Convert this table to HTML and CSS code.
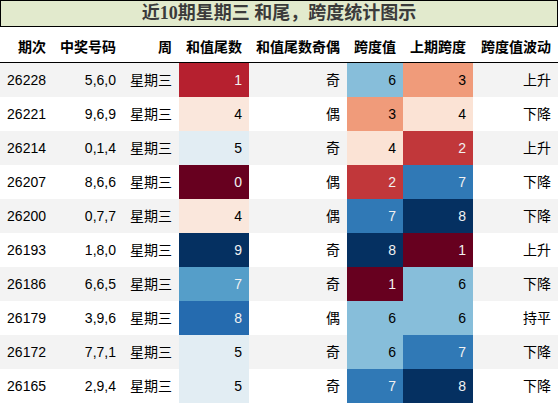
FILE: index.html
```html
<!DOCTYPE html>
<html lang="zh">
<head>
    <meta charset="UTF-8">
    <meta name="viewport" content="width=device-width, initial-scale=1.0">
    <title>近10期星期三 和尾，跨度统计图示</title>
    <link rel="stylesheet" href="styles.css">
</head>
<body>
    <table class="stats">
      <caption>近10期星期三 和尾，跨度统计图示</caption>
      <colgroup>
        <col class="c-issue">
        <col class="c-nums">
        <col class="c-week">
        <col class="c-tail">
        <col class="c-parity">
        <col class="c-span">
        <col class="c-prev">
        <col class="c-trend">
      </colgroup>
      <thead>
        <tr>
          <th>期次</th>
          <th>中奖号码</th>
          <th>周</th>
          <th>和值尾数</th>
          <th>和值尾数奇偶</th>
          <th>跨度值</th>
          <th>上期跨度</th>
          <th>跨度值波动</th>
        </tr>
      </thead>
      <tbody>
        <tr>
          <td>26228</td><td>5,6,0</td><td>星期三</td>
          <td class="g-b1 light">1</td><td>奇</td>
          <td class="g-k6">6</td><td class="g-k3">3</td><td>上升</td>
        </tr>
        <tr>
          <td>26221</td><td>9,6,9</td><td>星期三</td>
          <td class="g-b4">4</td><td>偶</td>
          <td class="g-k3">3</td><td class="g-k4">4</td><td>下降</td>
        </tr>
        <tr>
          <td>26214</td><td>0,1,4</td><td>星期三</td>
          <td class="g-b5">5</td><td>奇</td>
          <td class="g-k4">4</td><td class="g-k2 light">2</td><td>上升</td>
        </tr>
        <tr>
          <td>26207</td><td>8,6,6</td><td>星期三</td>
          <td class="g-b0 light">0</td><td>偶</td>
          <td class="g-k2 light">2</td><td class="g-k7 light">7</td><td>下降</td>
        </tr>
        <tr>
          <td>26200</td><td>0,7,7</td><td>星期三</td>
          <td class="g-b4">4</td><td>偶</td>
          <td class="g-k7 light">7</td><td class="g-k8 light">8</td><td>下降</td>
        </tr>
        <tr>
          <td>26193</td><td>1,8,0</td><td>星期三</td>
          <td class="g-b9 light">9</td><td>奇</td>
          <td class="g-k8 light">8</td><td class="g-k1 light">1</td><td>上升</td>
        </tr>
        <tr>
          <td>26186</td><td>6,6,5</td><td>星期三</td>
          <td class="g-b7 light">7</td><td>奇</td>
          <td class="g-k1 light">1</td><td class="g-k6">6</td><td>下降</td>
        </tr>
        <tr>
          <td>26179</td><td>3,9,6</td><td>星期三</td>
          <td class="g-b8 light">8</td><td>偶</td>
          <td class="g-k6">6</td><td class="g-k6">6</td><td>持平</td>
        </tr>
        <tr>
          <td>26172</td><td>7,7,1</td><td>星期三</td>
          <td class="g-b5">5</td><td>奇</td>
          <td class="g-k6">6</td><td class="g-k7 light">7</td><td>下降</td>
        </tr>
        <tr>
          <td>26165</td><td>2,9,4</td><td>星期三</td>
          <td class="g-b5">5</td><td>奇</td>
          <td class="g-k7 light">7</td><td class="g-k8 light">8</td><td>下降</td>
        </tr>
      </tbody>
    </table>
</body>
</html>
```

FILE: styles.css
```css
body {
  margin: 0;
  font-family: "Liberation Sans", "Noto Sans CJK SC", sans-serif;
  font-size: 14px;
  color: #000;
  background: #fff;
}

.stats {
  width: 558px;
  border-collapse: collapse;
  table-layout: fixed;
}

.stats caption {
  height: 25px;
  line-height: 25px;
  border: 1px solid #000;
  background-color: #e2eacd;
  color: #3b3b3b;
  font-family: "Liberation Serif", "Noto Sans CJK SC", serif;
  font-size: 18px;
  font-weight: bold;
  text-align: center;
}

.c-issue { width: 53px; }
.c-nums { width: 70px; }
.c-week { width: 56px; }
.c-tail { width: 70px; }
.c-parity { width: 98px; }
.c-span { width: 56px; }
.c-prev { width: 70px; }
.c-trend { width: 85px; }

th {
  padding: 12px 7px 6px;
  line-height: 17px;
  text-align: right;
  font-weight: bold;
  white-space: nowrap;
  border-bottom: 1px solid #000;
}

td {
  height: 34px;
  padding: 0 7px;
  line-height: 34px;
  text-align: right;
  white-space: nowrap;
}

tbody tr:nth-child(odd) {
  background-color: #f3f3f3;
}

tbody tr:nth-child(even) {
  background-color: #fff;
}

.light {
  color: #f1f1f1;
}

/* 和值尾数 gradient, 0..9 */
.g-b0 { background-color: #67001f; }
.g-b1 { background-color: #b6202f; }
.g-b4 { background-color: #fae7dc; }
.g-b5 { background-color: #e2edf3; }
.g-b7 { background-color: #559ec9; }
.g-b8 { background-color: #256baf; }
.g-b9 { background-color: #053061; }

/* 跨度 gradient, 1..8 */
.g-k1 { background-color: #67001f; }
.g-k2 { background-color: #c1373a; }
.g-k3 { background-color: #f09b7a; }
.g-k4 { background-color: #fbe3d5; }
.g-k6 { background-color: #87beda; }
.g-k7 { background-color: #3079b6; }
.g-k8 { background-color: #053061; }
```
